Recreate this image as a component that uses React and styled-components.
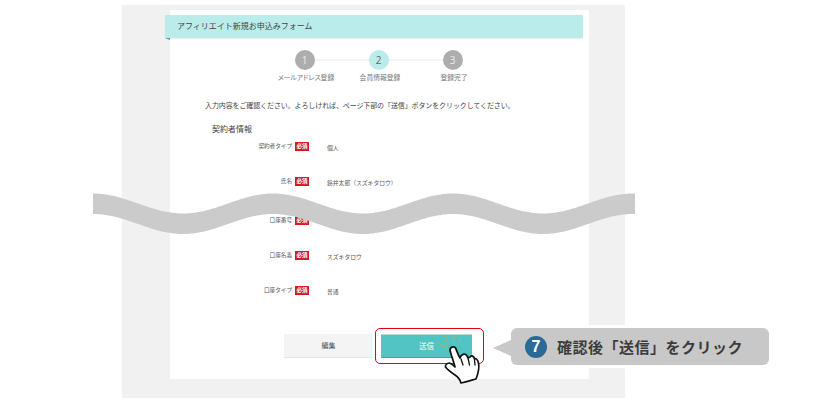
import React from 'react';
import styled, { createGlobalStyle } from 'styled-components';

const GlobalStyle = createGlobalStyle`
  html, body {
    margin: 0;
    padding: 0;
    background: #fff;
    font-family: "Noto Sans CJK JP", "Noto Sans", sans-serif;
  }
`;

const Page = styled.div`
  position: relative;
  width: 828px;
  height: 400px;
  overflow: hidden;
  padding: 5px 0 0 122px;
  box-sizing: border-box;
`;

const Panel = styled.div`
  width: 503px;
  height: 393px;
  box-sizing: border-box;
  padding: 5px 36px 19px 48px;
  background: #f1f1f1;
`;

const Card = styled.div`
  height: 369px;
  padding-top: 5px;
  box-sizing: border-box;
  background: #fff;
`;

const TitleBar = styled.div`
  position: relative;
  width: 418px;
  height: 23px;
  margin-left: -5px;
  padding-left: 12px;
  box-sizing: border-box;
  border-radius: 1px;
  background: #b9ecea;
  box-shadow: 0 1px 1px rgba(0, 0, 0, 0.08);
  color: #444;
  font-size: 8px;
  line-height: 22px;

  &::after {
    content: '';
    position: absolute;
    left: 0;
    top: 23px;
    border-top: 2px solid #4ba5ad;
    border-left: 5px solid transparent;
  }
`;

const Steps = styled.div`
  position: relative;
  display: grid;
  grid-template-columns: repeat(3, 74px);
  justify-content: center;
  margin-top: 12px;
  padding-right: 2px;

  &::before {
    content: '';
    position: absolute;
    top: 9px;
    left: 135px;
    width: 148px;
    height: 2px;
    background: #f3f3f3;
  }
`;

const Step = styled.div`
  position: relative;
  display: flex;
  flex-direction: column;
  align-items: center;
`;

const StepNumber = styled.div`
  width: 20px;
  height: 20px;
  border-radius: 50%;
  background: ${p => (p.$active ? '#b9ecea' : '#adadad')};
  color: ${p => (p.$active ? '#666' : '#eee')};
  font-family: "Open Sans", sans-serif;
  font-size: 10px;
  line-height: 20px;
  text-align: center;
`;

const StepLabel = styled.div`
  margin: 2px 0 0 3px;
  color: #777;
  font-size: 6.8px;
  line-height: 10px;
  white-space: nowrap;
  font-feature-settings: "palt";
`;

const Intro = styled.p`
  margin: 18px 0 0 35px;
  color: #444;
  font-size: 7px;
  letter-spacing: -0.11px;
  line-height: 10px;
  white-space: nowrap;
`;

const SectionTitle = styled.h2`
  margin: 14px 0 0 42px;
  color: #444;
  font-size: 8px;
  font-weight: 400;
  line-height: 10px;
`;

const Row = styled.div`
  display: flex;
  height: ${p => p.$height}px;
  padding-top: 7px;
  box-sizing: border-box;
`;

const Label = styled.div`
  width: 122px;
  color: #555;
  font-size: 5.6px;
  line-height: 10px;
  text-align: right;
  white-space: nowrap;
`;

const Badge = styled.span`
  width: 14px;
  height: 9px;
  margin: 1px 0 0 3px;
  background: #d7182a;
  color: #fff;
  font-size: 5.5px;
  font-weight: 700;
  line-height: 9px;
  text-align: center;
`;

const Value = styled.div`
  margin: 2px 0 0 18px;
  color: #555;
  font-size: 5.8px;
  line-height: 10px;
  white-space: nowrap;
`;

const Actions = styled.div`
  display: flex;
  align-items: center;
  margin: 15px 0 0 114px;
`;

const EditButton = styled.div`
  width: 89px;
  height: 24px;
  box-sizing: border-box;
  border-bottom: 1px solid #e6e6e6;
  background: #f4f4f4;
  color: #555;
  font-size: 7px;
  line-height: 23px;
  text-align: center;
`;

const Highlight = styled.div`
  width: 109px;
  height: 36px;
  margin-left: 2px;
  padding: 5px 5px;
  box-sizing: border-box;
  border: 1px solid #e60012;
  border-radius: 5px;
`;

const SendButton = styled.div`
  width: 91px;
  height: 24px;
  box-sizing: border-box;
  border-top: 1px solid #a7e0de;
  border-bottom: 1px solid #3fa9a9;
  background: #52c4c4;
  color: #fff;
  font-size: 7.5px;
  line-height: 22px;
  text-align: center;
`;

const WaveLayer = styled.svg`
  position: absolute;
  left: 93px;
  top: 190px;
`;

const HandLayer = styled.svg`
  position: absolute;
  left: 436px;
  top: 332px;
`;

const Callout = styled.div`
  position: absolute;
  left: 511px;
  top: 328px;
  display: flex;
  align-items: center;
  gap: 10px;
  width: 258px;
  height: 37px;
  padding-left: 14px;
  box-sizing: border-box;
  border-radius: 6px;
  background: #c8c8c8;
  box-shadow: 0 0 0 3px #fff;
  color: #3c3c3c;
  font-size: 15px;
  font-weight: 700;
  letter-spacing: 0.5px;
  white-space: nowrap;

  &::before {
    content: '';
    position: absolute;
    left: -18px;
    top: 12px;
    border-right: 18px solid #c8c8c8;
    border-top: 8px solid transparent;
    border-bottom: 8px solid transparent;
  }
`;

const CalloutNumber = styled.span`
  flex: none;
  width: 22px;
  height: 22px;
  border-radius: 50%;
  background: #2a6a96;
  color: #fff;
  font-family: "Liberation Sans", sans-serif;
  font-size: 16px;
  font-weight: 700;
  letter-spacing: 0;
  line-height: 22px;
  text-align: center;
`;

// ribbon between two offset sine-like curves
const buildWave = () => {
  const half = 90;
  const amp = 20;
  const curve = (top, reverse) => {
    const pts = [];
    for (let x = 0; x <= 542; x += 2) {
      const t = (x / half) * Math.PI;
      pts.push([x, top + (amp / 2) * (1 - Math.cos(t))]);
    }
    return reverse ? pts.reverse() : pts;
  };
  const all = [...curve(3.5, false), ...curve(24, true)];
  return 'M' + all.map(p => p[0] + ' ' + p[1].toFixed(1)).join('L') + 'Z';
};

const Wave = () => (
  <WaveLayer width="542" height="50" viewBox="0 0 542 50">
    <path d={buildWave()} fill="#cbcbcb" />
  </WaveLayer>
);

const Hand = () => (
  <HandLayer width="46" height="54" viewBox="0 0 46 54">
    <g stroke="#c9ac45" strokeWidth="1" strokeLinecap="round">
      <path d="M4.700 12.700 L10.700 15.300" />
      <path d="M9 4.700 L12.300 10.700" />
      <path d="M18 3.700 L17.300 9.700" />
      <path d="M25.700 6.300 L21.300 11.300" />
    </g>
    <path
      d="M14 18 C14 15 18 14 19.500 16 C20.500 18 22 23 24 26 C25 22 29 21 31 24 C32 26 33 26 34 25 C35.500 23 38 24 38.500 27 C40 26 42 28 42.500 31 C43.500 36 42 42 40 47 C33 49 30 50 25 51 C24 47 22 45 19 43 C16 41 11 37 9.500 35 C9 33 11 31 13.500 31 C15 31.500 17.500 33.500 19 35 C17.500 29 15 23 14 18 Z"
      fill="#fff"
      stroke="#111"
      strokeWidth="1.700"
      strokeLinejoin="round"
    />
    <g stroke="#111" strokeWidth="1.300" strokeLinecap="round">
      <path d="M25 27 L27 33" />
      <path d="M32 26 L33.500 33" />
      <path d="M38.500 28 L39 33" />
    </g>
  </HandLayer>
);

const rows = [
  { label: '契約者タイプ', value: '個人', height: 35 },
  { label: '氏名', value: '鈴井太郎（スズキタロウ）', height: 39 },
  { label: '口座番号', value: '', height: 35 },
  { label: '口座名義', value: 'スズキタロウ', height: 35 },
  { label: '口座タイプ', value: '普通', height: 35 },
];

const steps = ['メールアドレス登録', '会員情報登録', '登録完了'];

const App = () => {
  return (
    <Page>
      <GlobalStyle />
      <Panel>
        <Card>
          <TitleBar>アフィリエイト新規お申込みフォーム</TitleBar>
          <Steps>
            {steps.map((label, i) => (
              <Step key={label}>
                <StepNumber $active={i === 1}>{i + 1}</StepNumber>
                <StepLabel>{label}</StepLabel>
              </Step>
            ))}
          </Steps>
          <Intro>入力内容をご確認ください。よろしければ、ページ下部の「送信」ボタンをクリックしてください。</Intro>
          <SectionTitle>契約者情報</SectionTitle>
          {rows.map(row => (
            <Row key={row.label} $height={row.height}>
              <Label>{row.label}</Label>
              <Badge>必須</Badge>
              <Value>{row.value}</Value>
            </Row>
          ))}
          <Actions>
            <EditButton>編集</EditButton>
            <Highlight>
              <SendButton>送信</SendButton>
            </Highlight>
          </Actions>
        </Card>
      </Panel>
      <Wave />
      <Hand />
      <Callout>
        <CalloutNumber>7</CalloutNumber>
        確認後「送信」をクリック
      </Callout>
    </Page>
  );
};

export default App;
